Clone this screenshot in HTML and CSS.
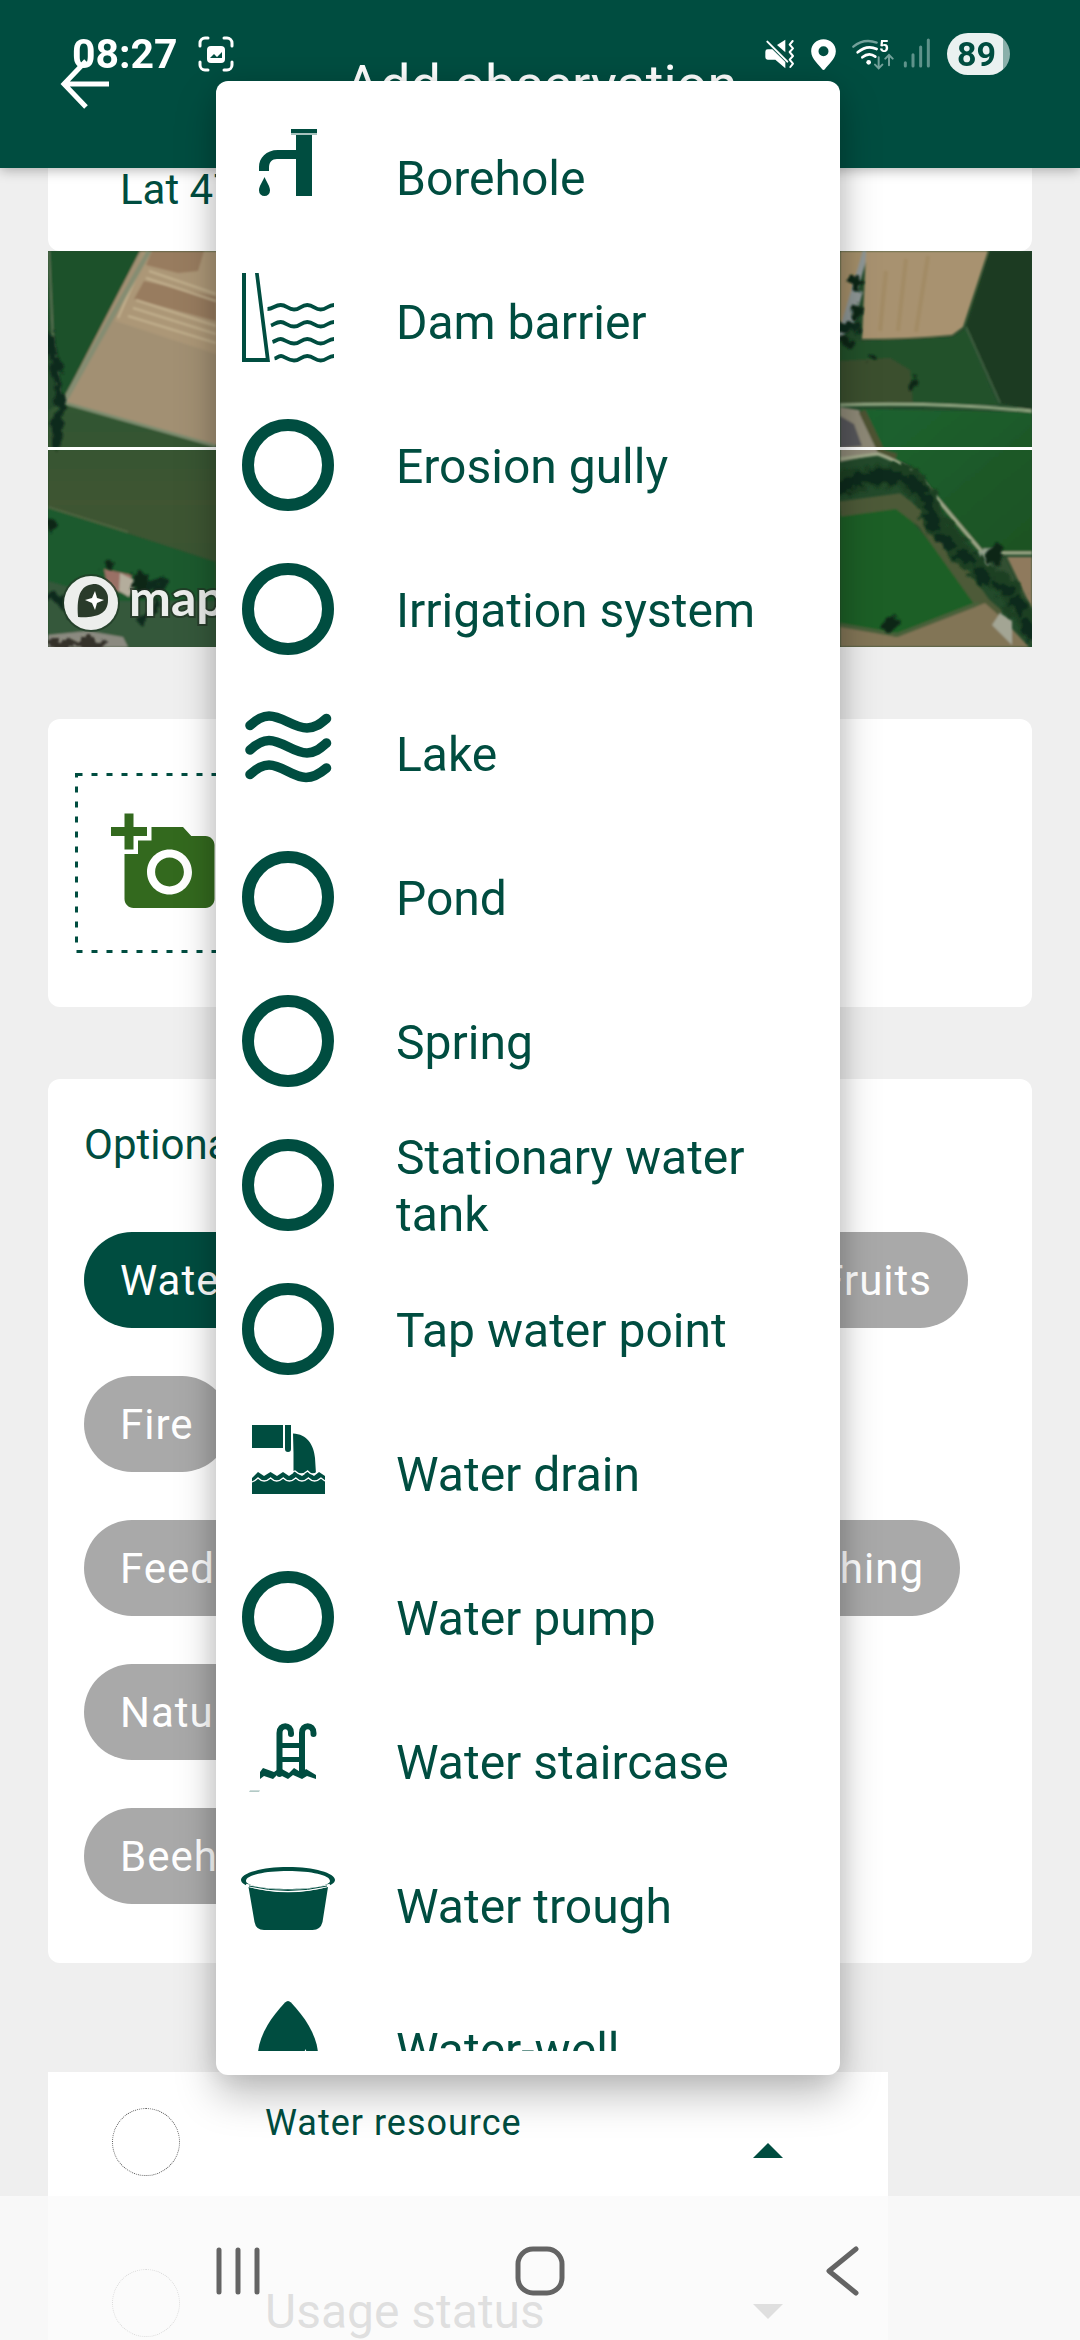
FILE: index.html
```html
<!DOCTYPE html>
<html lang="en">
<head>
    <meta charset="UTF-8">
    <meta name="viewport" content="width=device-width, initial-scale=1.0">
    <title>Add observation</title>
    <link rel="stylesheet" href="styles.css">
</head>
<body>
    <!-- Shared icon for items without their own drawing -->
    <svg class="sprite" width="0" height="0" aria-hidden="true">
        <symbol id="icon-ring" viewBox="0 0 96 96">
            <circle cx="48" cy="48" r="40" fill="none" stroke="currentColor" stroke-width="12"/>
        </symbol>
    </svg>

    <div class="status-bar">
        <div class="status-left">
            <span class="clock">08:27</span>
            <svg width="36" height="36" viewBox="0 0 36 36" fill="none" stroke="#fff" stroke-width="3" stroke-linecap="round">
                <path d="M2 10V7a5 5 0 0 1 5-5h3M26 2h3a5 5 0 0 1 5 5v3M34 26v3a5 5 0 0 1-5 5h-3M10 34H7a5 5 0 0 1-5-5v-3"/>
                <rect x="9" y="10" width="18" height="17" rx="4" fill="#fff" stroke="none"/>
                <path d="M12 22l4-4 3 3 5-5v6z" fill="#004d40" stroke="none"/>
            </svg>
        </div>
        <div class="status-right">
            <svg width="30" height="30" viewBox="75 56 90 90">
                <path d="M136 58v38l-25-22z" fill="#fff"/>
                <path d="M76 94q0-7 7-7h14l39 38v19l-30-26H83q-7 0-7-7z" fill="#fff"/>
                <path d="M82 64l60 60" stroke="#fff" stroke-width="6" stroke-linecap="round"/>
                <path d="M158 62l-9 11 10 11-10 11 10 12-10 11 10 12-8 10" fill="none" stroke="#fff" stroke-width="6" stroke-linecap="round" stroke-linejoin="round"/>
            </svg>
            <svg width="25" height="31" viewBox="212 55 74 93">
                <path fill-rule="evenodd" d="M249 56c21 0 37 16 37 36 0 24-26 42-33 54q-4 4-8 0c-7-12-33-30-33-54 0-20 16-36 37-36zm0 21a15 15 0 1 0 0 30 15 15 0 0 0 0-30z" fill="#fff"/>
            </svg>
            <div class="network">
                <svg width="42" height="32" viewBox="338 56 126 96" fill="none" stroke-linecap="round">
                    <path d="M342 82q32-26 70-12" stroke="#73a19a" stroke-width="7"/>
                    <path d="M355 99q28-24 57-10M369 114q20-17 39-2" stroke="#fff" stroke-width="8"/>
                    <circle cx="388" cy="129" r="7" fill="#fff"/>
                    <path d="M418 114v32m-11-10l11 11 11-11M449 138v-30m-11 10l11-11 11 11" stroke="#73a19a" stroke-width="6"/>
                    <text x="420" y="98" class="wifi-gen">5</text>
                </svg>
                <svg width="28" height="30" viewBox="491 56 84 90" stroke="#5f938b" stroke-width="9" stroke-linecap="round">
                    <path d="M498 130v10M521 106v34"/>
                    <path d="M544 83v57M567 62v78"/>
                </svg>
            </div>
            <span class="battery">89</span>
        </div>
    </div>

    <header class="app-bar">
        <button class="back" aria-label="Back">
            <svg width="50" height="50" viewBox="0 0 50 50" fill="none" stroke="#fff" stroke-width="5">
                <path d="M49 25H4M26 2L4 25l22 23"/>
            </svg>
        </button>
        <h1>Add observation</h1>
    </header>

    <main>
        <section class="card location">Lat 47</section>

        <!-- Satellite map -->
        <svg class="map" viewBox="0 0 984 396" preserveAspectRatio="none" role="img" aria-label="Map">
            <defs>
                <filter id="rough" x="-5%" y="-5%" width="110%" height="110%">
                    <feTurbulence type="fractalNoise" baseFrequency="0.11" numOctaves="2" seed="4"/>
                    <feDisplacementMap in="SourceGraphic" scale="16" xChannelSelector="R" yChannelSelector="G"/>
                    <feGaussianBlur stdDeviation="1"/>
                </filter>
                <filter id="soft">
                    <feGaussianBlur stdDeviation="1"/>
                </filter>
                <linearGradient id="grass" x1="0" y1="0" x2="1" y2="1">
                    <stop offset="0" stop-color="#1f6330"/>
                    <stop offset="1" stop-color="#1b5223"/>
                </linearGradient>
                <linearGradient id="olive" x1="0" y1="0" x2="0" y2="1">
                    <stop offset="0" stop-color="#2f5633"/>
                    <stop offset="0.4" stop-color="#3f5433"/>
                    <stop offset="1" stop-color="#33552f"/>
                </linearGradient>
            </defs>
            <rect width="984" height="396" fill="#234a2b"/>

            <g filter="url(#soft)">
                <!-- west side -->
                <path d="M0 0H100L12 154 0 60z" fill="#1d5129"/>
                <path d="M1 0L5 90 13 155" fill="none" stroke="#5c7355" stroke-width="2"/>
                <path d="M92 0L14 151 168 194H400V0z" fill="#a29073"/>
                <path d="M96 0L67 70 168 103H400V0z" fill="#ac9777"/>
                <path d="M104 0L98 14 130 22 150 20 156 0zM96 30L86 48 168 70V46z" fill="#987b5e"/>
                <g fill="none" stroke="#c2b08e" stroke-width="2">
                    <path d="M98 3l-28 64M101 20l67 23M98 27l70 23M88 49l80 26M85 57l83 26M80 65l88 27"/>
                </g>
                <path d="M101 0L16 151" stroke="#858d72" stroke-width="5"/>
                <path d="M12 152L168 196H400V400H0V160z" fill="url(#olive)"/>
                <path d="M13 151l155 44" stroke="#7c8c6e" stroke-width="3"/>
                <path d="M0 256L168 311V396H0z" fill="#1d5a2d"/>
                <path d="M0 256l80 25" stroke="#4f6540" stroke-width="2"/>
                <path d="M0 330L70 350 168 350V396H0z" fill="#35593a"/>
                <path d="M0 384l40-4 35 6 5 10H0z" fill="#8b8a80"/>
                <path d="M56 318l28 6-8 18-16-4z" fill="#9a7065"/>
                <path d="M72 322l16 8-7 16-10-6z" fill="#b4ad9c"/>

                <!-- east side -->
                <path d="M792 0H818L800 80H792z" fill="#a48f6b"/>
                <path d="M818 0L792 88M812 40l-10 35" stroke="#8e9796" stroke-width="6" fill="none"/>
                <path d="M818 0H940L915 76 904 84Q860 88 814 88z" fill="#a8926f"/>
                <path d="M838 20l-6 60M858 8l-8 72M880 5l-12 76" stroke="#9a8258" stroke-width="4" opacity=".4"/>
                <path d="M942 0H984V159L952 152 918 76z" fill="#1d3b20"/>
                <path d="M792 88L814 90 904 86 918 78 950 154H792z" fill="#23512b"/>
                <path d="M918 76l34 76" stroke="#3e5f40" stroke-width="2"/>
                <path d="M792 110l50-3 20 12 3 35H792z" fill="#3b4f2f"/>
                <path d="M812 158L984 161V303H930L860 219 832 204z" fill="url(#grass)"/>
                <path d="M792 154q100-3 192 6" stroke="#8fa480" stroke-width="3" fill="none"/>
                <path d="M792 156l19 3 20 44-39 8z" fill="#8e8977"/>
                <path d="M814 160l20 42 14 4" fill="none" stroke="#4d5233" stroke-width="7"/>
                <path d="M792 165l14 8 8 22-22 2z" fill="#57575a"/>
                <path d="M792 262L850 254 935 352 849 386 792 372z" fill="#1f5f28"/>
                <path d="M792 258l58-8 26 20 60 84 14 12" fill="none" stroke="#4e5a37" stroke-width="15"/>
                <path d="M792 374l57 12 88-34 18 16 26 28H792z" fill="#827556"/>
                <path d="M792 374l57 10 82-32" fill="none" stroke="#48613a" stroke-width="4"/>
                <path d="M792 208l38-5Q866 216 882 239L935 302H984" fill="none" stroke="#a3ab8c" stroke-width="3"/>
                <path d="M959 306H984V358z" fill="#8f7a5d"/>
                <path d="M956 304l30 62v30l-18-32-26-50z" fill="#315032"/>
                <path d="M932 300l10 18 18 24M935 300h12" fill="none" stroke="#92a08c" stroke-width="5"/>
                <path d="M952 362l12 8v24l-20-20z" fill="#a3a594"/>
            </g>

            <!-- trees and hedges -->
            <g filter="url(#rough)" fill="#0d2618" stroke="#0f2a1b" stroke-linecap="round">
                <path d="M0 85q12 40 12 68l-4 42" fill="none" stroke-width="9"/>
                <circle cx="3" cy="273" r="6"/>
                <circle cx="60" cy="315" r="5"/>
                <circle cx="92" cy="330" r="9"/>
                <path d="M92 342l24-10" stroke-width="9"/>
                <path d="M94 370l18-20" stroke-width="7"/>
                <path d="M2 345q18 0 24 22" fill="none" stroke-width="9"/>
                <path d="M2 393h50" stroke="#34302b" stroke-width="8"/>
                <path d="M792 234q26-12 60-9 26 8 34 46l34 38 44 34 16 30" fill="none" stroke="#1b3f23" stroke-width="22"/>
                <path d="M792 236q26-14 60-10 22 6 30 30" fill="none" stroke-width="13"/>
                <path d="M882 266l10 20 14 12 16 10 16 20 26 14 14 28 6 24" fill="none" stroke-width="12" stroke-dasharray="10 15"/>
                <circle cx="807" cy="32" r="6"/>
                <circle cx="808" cy="61" r="6"/>
                <path d="M794 76h12" stroke-width="12"/>
                <circle cx="797" cy="93" r="6"/>
                <circle cx="824" cy="107" r="3"/>
                <circle cx="863" cy="134" r="5"/>
                <circle cx="947" cy="304" r="8"/>
                <circle cx="843" cy="372" r="8"/>
            </g>
            <path d="M0 197.500H984" stroke="#fff" stroke-width="3"/>

            <!-- logo -->
            <circle cx="43" cy="352" r="29" fill="#213a26" opacity=".7"/>
            <circle cx="43" cy="352" r="27" fill="#eceeec"/>
            <path d="M30 366c-2-24 4-33 18-33a15 15 0 0 1 12 16c0 15-13 18-30 17z" fill="#2a3b2b"/>
            <path d="M47 340l2 7 7 2-7 3-2 7-3-7-7-3 7-2z" fill="#fff"/>
            <text x="81" y="365" class="map-logo">mapbox</text>
        </svg>

        <section class="card photos">
            <button class="add-photo" aria-label="Add photo">
                <svg width="180" height="180" viewBox="0 0 180 180">
                    <rect x="1.500" y="1.500" width="177" height="177" fill="none" stroke="#004d40" stroke-width="3" stroke-dasharray="6 9"/>
                    <g transform="translate(36 36) scale(4.500)">
                        <path fill="#33691e" fill-rule="evenodd" d="M3 4V1h2v3h3v2H5v3H3V6H0V4h3zm3 6V7h3V4h7l1.830 2H21c1.100 0 2 .9 2 2v12c0 1.100-.9 2-2 2H5c-1.100 0-2-.9-2-2V10h3zm7 9c2.760 0 5-2.240 5-5s-2.240-5-5-5-5 2.240-5 5 2.240 5 5 5zm-3.200-5c0 1.770 1.430 3.200 3.200 3.200s3.200-1.430 3.200-3.200-1.430-3.200-3.200-3.200-3.200 1.430-3.200 3.200z"/>
                    </g>
                </svg>
            </button>
        </section>

        <section class="card tags">
            <h2>Optional</h2>
            <div class="chip-list">
                <div class="chip-row">
                    <button class="chip active">Water resource</button>
                    <button class="chip">Fruits</button>
                </div>
                <div class="chip-row"><button class="chip">Fire</button></div>
                <div class="chip-row narrow">
                    <button class="chip">Feeding</button>
                    <button class="chip">Fishing</button>
                </div>
                <div class="chip-row"><button class="chip">Nature</button></div>
                <div class="chip-row"><button class="chip">Beehives</button></div>
            </div>
        </section>

        <section class="fields">
            <div class="field-row">
                <span class="dot"></span>
                <div class="field">
                    <label for="resource">Water resource</label>
                    <select id="resource"><option></option></select>
                </div>
                <svg class="caret" width="30" height="15" viewBox="0 0 30 15"><path d="M15 0l15 15H0z" fill="#004d40"/></svg>
            </div>
            <div class="field-row">
                <span class="dot"></span>
                <div class="field">
                    <select aria-label="Usage status"><option>Usage status</option></select>
                </div>
                <svg class="caret" width="30" height="15" viewBox="0 0 30 15"><path d="M0 0h30L15 15z" fill="#757575"/></svg>
            </div>
        </section>
    </main>

    <div class="menu">
        <ul>
            <li><button>
                <svg viewBox="0 0 96 96">
                    <path d="M51 0h26v4H51zM56 6h16v61H56z"/>
                    <path d="M51 4h26v2H51z" opacity=".35"/>
                    <path d="M57 21H38C26 21 19 29 19 38v4h10v-3c0-6 3-9 8-9h20z"/>
                    <path d="M24.500 48c2 5 5.500 9 5.500 13.500a5.400 5.400 0 0 1-11 0C19 57 22.500 53 24.500 48z"/>
                </svg>
                <span>Borehole</span>
            </button></li>
            <li><button>
                <svg viewBox="0 0 96 96">
                    <path d="M2 0h4v85h19.700L15 0h3.700L30 89H2z"/>
                    <g fill="none" stroke="currentColor" stroke-width="3.800">
                        <path d="M27.500 36C33 36 35 32 40.700 32S48 36.500 54 36.500 61 32 67.300 32s7.400 4.500 13.400 4.500S88 32 94 32"/>
                        <path d="M31 52.500C35 51 36 49 40.700 49S48 53.500 54 53.500 61 49 67.300 49s7.400 4.500 13.400 4.500S88 49 94 49"/>
                        <path d="M32.500 69C36 68 37 66 40.700 66S48 70.500 54 70.500 61 66 67.300 66s7.400 4.500 13.400 4.500S88 66 94 66"/>
                        <path d="M34.500 85.500C37 85 38 83 41 83s7 4.500 13 4.500S61 83 67.300 83s7.400 4.500 13.400 4.500S88 83 94 83"/>
                    </g>
                </svg>
                <span>Dam barrier</span>
            </button></li>
            <li><button><svg><use href="#icon-ring"/></svg><span>Erosion gully</span></button></li>
            <li><button><svg><use href="#icon-ring"/></svg><span>Irrigation system</span></button></li>
            <li><button>
                <svg viewBox="0 0 96 96">
                    <g fill="none" stroke="currentColor" stroke-width="9.600" stroke-linecap="round">
                        <path d="M10 20.500C17 14 23 11 29 11c13 0 25 12 38 12 8 0 13-4 19.500-9.500"/>
                        <path d="M10 45C17 38.500 23 35.500 29 35.500c13 0 25 12.500 38 12.500 8 0 13-4.500 19.500-10"/>
                        <path d="M10 69.500C17 63 23 60 29 60c13 0 24 12.500 37 12.500 8 0 14-4 20.500-9.500"/>
                    </g>
                </svg>
                <span>Lake</span>
            </button></li>
            <li><button><svg><use href="#icon-ring"/></svg><span>Pond</span></button></li>
            <li><button><svg><use href="#icon-ring"/></svg><span>Spring</span></button></li>
            <li><button><svg><use href="#icon-ring"/></svg><span>Stationary water tank</span></button></li>
            <li><button><svg><use href="#icon-ring"/></svg><span>Tap water point</span></button></li>
            <li><button>
                <svg viewBox="0 0 96 96">
                    <path d="M12 0h31v23H12zM45 0h6v24q0 3-3 3t-3-3z"/>
                    <path d="M53 8.500C67 9 74 20 75 33l1 16H53.500V28z"/>
                    <path d="M12 53l6-6 6 4 6.500-4 6.500 4 6-4 6 4 6-4 7 4 6-4 6 4 5-4 6 4v18H12z"/>
                    <g fill="none" stroke="#fff" stroke-width="1.300">
                        <path d="M12 57q3-1 6-4 6 6 12.600 0 6 6 12.600 0 6 6 12.600 0 6 6 12.600 0 6 6 12.600 0l4 3"/>
                        <path d="M52 47l3-1q6 6 12.600 0 5 6 11 0"/>
                    </g>
                </svg>
                <span>Water drain</span>
            </button></li>
            <li><button><svg><use href="#icon-ring"/></svg><span>Water pump</span></button></li>
            <li><button>
                <svg viewBox="0 0 96 96">
                    <g fill="none" stroke="currentColor" stroke-width="6">
                        <path d="M39.500 61V20c0-9 11.500-9 11.500 0v1M62 61V20c0-9 11.500-9 11.500 0v1" stroke-linecap="round"/>
                        <path d="M39 32.500h23M39 46.500h23" stroke-width="5"/>
                    </g>
                    <path d="M20 59l3-4 11 4 6-4 9 5 5-5 8 5 4-4 10 6v4l-9-3-5 3-9-4-5 4-10-5-5 5-9-3-4 3z"/>
                    <path d="M10 77.500h10l-1 1.200H9z" opacity=".4"/>
                </svg>
                <span>Water staircase</span>
            </button></li>
            <li><button>
                <svg viewBox="0 0 96 96">
                    <path fill-rule="evenodd" d="M48 10c26 0 47 6 47 13 0 6-18 11-47 11S1 29 1 23c0-7 21-13 47-13zm0 4C25 14 6 18 6 24c0 5 19 8 42 8s42-3 42-8c0-6-19-10-42-10z"/>
                    <path d="M8.500 30Q48 40 88 30L82.500 65q-2 8-10 8H24q-8 0-9.500-8z"/>
                    <path d="M6 28q42 12 84 0" fill="none" stroke="#fff" stroke-width="2.500"/>
                    <path d="M9 29q39 9 78 0" fill="none" stroke="currentColor"/>
                </svg>
                <span>Water trough</span>
            </button></li>
            <li><button>
                <svg viewBox="0 0 96 96">
                    <path d="M45 1.500q3-3 6 0C65 16 77 35 78 52v38H18V52C19 35 31 16 45 1.500z"/>
                    <path d="M64 52l1.500-4 1.500 4z" fill="#fff"/>
                </svg>
                <span>Water-well</span>
            </button></li>
        </ul>
    </div>

    <nav class="nav-bar">
        <button aria-label="Recent apps">
            <svg width="48" height="50" viewBox="0 0 48 50"><path d="M5 4v42M24 4v42M43 4v42"/></svg>
        </button>
        <button aria-label="Home">
            <svg width="50" height="50" viewBox="0 0 50 50"><rect x="3" y="3" width="44" height="44" rx="15"/></svg>
        </button>
        <button aria-label="Back">
            <svg width="34" height="50" viewBox="0 0 34 50"><path d="M31 3L4 25l27 22"/></svg>
        </button>
    </nav>
</body>
</html>
```
FILE: styles.css
```css
:root {
    --green: #004d40;
    --page: #efefef;
    --chip: #a9a9a9;
}

* {
    box-sizing: border-box;
}

body {
    margin: 0;
    height: 100vh;
    overflow: hidden;
    background: var(--page);
    color: var(--green);
    font-family: Roboto, sans-serif;
    font-size: 42px;
}

button {
    padding: 0;
    border: none;
    background: none;
    font: inherit;
    color: inherit;
    cursor: pointer;
}

svg {
    display: block;
    flex-shrink: 0;
}

.sprite {
    position: absolute;
}

/* System status bar, drawn over the app */
.status-bar {
    position: fixed;
    top: 0;
    left: 0;
    right: 0;
    z-index: 5;
    height: 108px;
    padding: 0 70px 0 72px;
    display: flex;
    align-items: center;
    justify-content: space-between;
    color: #fff;
}

.status-left {
    display: flex;
    align-items: center;
    gap: 20px;
}

.status-right {
    display: flex;
    align-items: center;
    gap: 16px;
}

.network {
    display: flex;
    gap: 9px;
}

.clock {
    font-size: 41px;
    font-weight: 700;
}

.wifi-gen {
    font-size: 50px;
    font-weight: 700;
    fill: #fff;
}

.battery {
    width: 63px;
    height: 42px;
    padding-right: 4px;
    border-radius: 21px;
    background: linear-gradient(90deg, #eaf1f0 56px, #8ab0aa 56px);
    color: var(--green);
    font-size: 34px;
    font-weight: 700;
    line-height: 42px;
    text-align: center;
}

.app-bar {
    position: relative;
    z-index: 1;
    height: 168px;
    padding: 0 60px;
    display: flex;
    align-items: center;
    background: var(--green);
    color: #fff;
    box-shadow: 0 2px 12px rgba(0, 0, 0, 0.3);
}

.app-bar h1 {
    flex: 1;
    margin: 0 48px 0 0;
    font-size: 54px;
    font-weight: 400;
    text-align: center;
}

main {
    padding: 0 48px;
}

.card {
    background: #fff;
    border-radius: 12px;
}

.location {
    padding: 2px 72px 41px;
    border-radius: 0 0 12px 12px;
    line-height: 40px;
}

.map {
    width: 100%;
    height: 396px;
}

.map-logo {
    font-family: Lato, sans-serif;
    font-size: 50px;
    font-weight: 700;
    fill: #eceeec;
    stroke: rgba(33, 45, 35, 0.6);
    stroke-width: 4px;
    paint-order: stroke;
}

.photos {
    margin-top: 72px;
    padding: 54px 27px;
}

.add-photo {
    display: block;
}

.tags {
    margin-top: 72px;
    padding: 36px 36px 59px;
}

.tags h2 {
    margin: 0 0 57px;
    font-size: 42px;
    font-weight: 400;
    line-height: 60px;
}

.chip-list {
    display: flex;
    flex-direction: column;
    gap: 48px;
    padding-right: 28px;
}

.chip-row {
    display: flex;
    justify-content: space-between;
}

.chip-row.narrow {
    padding-right: 8px;
}

.chip {
    height: 96px;
    padding: 0 36px;
    border-radius: 48px;
    background: var(--chip);
    color: #fff;
    letter-spacing: 1px;
}

.chip.active {
    background: var(--green);
}

.fields {
    display: flex;
    flex-direction: column;
    gap: 21px;
    margin: 109px 144px 0 0;
    background: #fff;
}

.field-row {
    display: flex;
    align-items: center;
    height: 140px;
    padding: 0 105px 0 64px;
}

.dot {
    width: 68px;
    height: 68px;
    margin-right: 85px;
    border: 1px dotted #555;
    border-radius: 50%;
}

.field {
    flex: 1;
    height: 124px;
    margin-top: 16px;
    display: flex;
    flex-direction: column;
}

.field label {
    padding-top: 14px;
    font-size: 36px;
    line-height: 42px;
    letter-spacing: 1px;
}

.field select {
    flex: 1;
    padding: 0;
    border: none;
    background: none;
    appearance: none;
    color: #757575;
    font: inherit;
    font-size: 48px;
}

.caret {
    margin-top: 16px;
}

/* Drop-down list opened from the water resource field */
.menu {
    position: fixed;
    top: 81px;
    bottom: 265px;
    left: 20%;
    right: 240px;
    z-index: 3;
    padding: 24px 0;
    border-radius: 12px;
    background: #fff;
    box-shadow: 0 20px 40px rgba(0, 0, 0, 0.26), 0 0 28px rgba(0, 0, 0, 0.1);
}

.menu ul {
    height: 100%;
    margin: 0;
    padding: 0;
    overflow-y: auto;
    scrollbar-width: none;
    list-style: none;
}

.menu button {
    display: flex;
    align-items: center;
    gap: 60px;
    width: 100%;
    height: 144px;
    padding: 0 24px;
    font-size: 48px;
    line-height: 57px;
    text-align: left;
}

.menu span {
    padding-top: 2px;
}

.menu svg {
    width: 96px;
    height: 96px;
    fill: currentColor;
}

/* System navigation */
.nav-bar {
    position: fixed;
    left: 0;
    right: 0;
    bottom: 0;
    z-index: 4;
    height: 144px;
    padding-top: 6px;
    display: flex;
    align-items: center;
    justify-content: center;
    background: rgba(250, 250, 250, 0.8);
}

.nav-bar button {
    width: 28%;
    display: flex;
    justify-content: center;
}

.nav-bar svg {
    fill: none;
    stroke: #646464;
    stroke-width: 5;
    stroke-linecap: round;
    stroke-linejoin: round;
}
```
